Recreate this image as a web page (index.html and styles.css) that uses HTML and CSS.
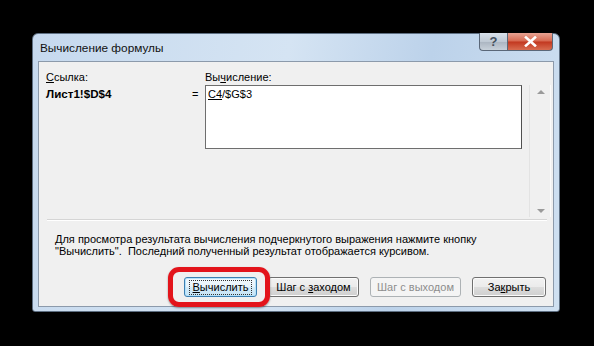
FILE: index.html
```html
<!DOCTYPE html>
<html lang="ru">
<head>
  <meta charset="UTF-8">
  <title>Вычисление формулы</title>
  <link rel="stylesheet" href="styles.css">
</head>
<body>
  <div class="window">
    <div class="titlebar">
      <span class="title">Вычисление формулы</span>
      <div class="caption-buttons">
        <span class="cap-btn help">?</span>
        <span class="cap-btn close">
          <svg width="13" height="11" viewBox="0 0 13 11">
            <path d="M2 1.5 L11 9.5 M11 1.5 L2 9.5" stroke="#fff" stroke-width="2.6" stroke-linecap="square"/>
          </svg>
        </span>
      </div>
    </div>
    <div class="content">
      <div class="pane">
        <div class="fields">
          <span class="label"><u>С</u>сылка:</span>
          <span></span>
          <span class="label">Вы<u>ч</u>исление:</span>
          <span class="ref">Лист1!$D$4</span>
          <span class="eq">=</span>
          <div class="formula"><u>C4</u>/$G$3</div>
        </div>
        <div class="vscroll">
          <span class="arrow up"></span>
          <span class="arrow down"></span>
        </div>
      </div>
      <div class="separator"></div>
      <p class="hint">Для просмотра результата вычисления подчеркнутого выражения нажмите кнопку<br>"Вычислить".&nbsp; Последний полученный результат отображается курсивом.</p>
      <div class="buttons">
        <div class="marked">
          <button class="btn focused"><span class="focus-ring"><u>В</u>ычислить</span></button>
          <span class="highlight"></span>
        </div>
        <button class="btn wide">Шаг с <u>з</u>аходом</button>
        <button class="btn wide" disabled>Шаг с выходом</button>
        <button class="btn">За<u>к</u>рыть</button>
      </div>
    </div>
  </div>
</body>
</html>
```

FILE: styles.css
```css
body {
  margin: 0;
  background: #000;
  font-family: "Liberation Sans", Arial, sans-serif;
  font-size: 11px;
  color: #000;
}

.window {
  width: 528px;
  height: 279px;
  margin: 33px 0 0 32px;
  box-sizing: border-box;
  border: 1px solid #5e6f82;
  border-radius: 6px 6px 3px 3px;
  background: linear-gradient(100deg, #c6d9ee 0%, #d5e4f3 45%, #bcd2ea 70%, #cfe0f1 100%);
  display: flex;
  flex-direction: column;
}

.titlebar {
  height: 27px;
  display: flex;
  justify-content: space-between;
  align-items: flex-start;
  padding-left: 7px;
}

.title {
  font-size: 11.8px;
  margin-top: 7px;
  color: #111;
}

.caption-buttons {
  display: flex;
  margin-right: 6px;
  margin-top: -1px;
}

.cap-btn {
  height: 18px;
  box-sizing: border-box;
  display: flex;
  align-items: center;
  justify-content: center;
  border: 1px solid #5a6778;
  border-top: none;
}

.help {
  width: 28px;
  border-right: none;
  border-radius: 0 0 0 4px;
  background: linear-gradient(#d9e1ea, #bfc9d4 50%, #aab4c0 51%, #c8d1da);
  color: #44505e;
  font-weight: bold;
  font-size: 13px;
}

.close {
  width: 46px;
  border-radius: 0 0 4px 0;
  background: linear-gradient(#e8a393, #d7684f 48%, #c2371f 52%, #d86c50);
}

.content {
  flex: 1;
  margin: 0 5px 4px 5px;
  background: #f0f0f0;
  border: 1px solid #8c9aab;
  padding: 7px 0 0 7px;
  display: flex;
  flex-direction: column;
}

.pane {
  display: flex;
  height: 148px;
}

.fields {
  display: grid;
  grid-template-columns: 146px 13px 317px;
  grid-template-rows: 16px 64px;
  align-content: start;
  line-height: 14px;
}

.label {
  padding-top: 1px;
}

.ref {
  font-weight: bold;
  font-size: 11.6px;
  padding-top: 2px;
}

.eq {
  padding-top: 2px;
}

.formula {
  background: #fff;
  border: 1px solid #6e6e6e;
  border-right-color: #505050;
  padding: 1px 2px;
}

.vscroll {
  width: 20px;
  margin: 16px 0 0 7px;
  border-left: 1px solid #e3e3e3;
  border-right: 1px solid #fbfbfb;
  display: flex;
  flex-direction: column;
  justify-content: space-between;
  align-items: center;
  padding: 5px 0 4px;
}

.arrow {
  width: 0;
  height: 0;
  border-left: 4px solid transparent;
  border-right: 4px solid transparent;
  margin-left: 2px;
}

.arrow.up {
  border-bottom: 4px solid #9a9a9a;
}

.arrow.down {
  border-top: 4px solid #9a9a9a;
}

.separator {
  margin: 2px 6px 0 1px;
  border-top: 1px solid #d5d5d5;
  border-bottom: 1px solid #fff;
}

.hint {
  margin: 12px 0 0 9px;
  line-height: 12px;
}

.buttons {
  display: flex;
  gap: 11px;
  margin: 20px 0 0 138px;
}

.btn {
  height: 20px;
  width: 74px;
  padding: 0;
  font: inherit;
  color: #000;
  border: 1px solid #707070;
  border-radius: 3px;
  background: linear-gradient(#f2f2f2, #ebebeb 50%, #dddddd 51%, #cfcfcf);
  box-shadow: inset 0 0 0 1px #fbfbfb;
}

.btn.wide {
  width: 91px;
}

.btn:disabled {
  color: #8d8d8d;
  border-color: #adb2b5;
  background: #f4f4f4;
  box-shadow: none;
}

.btn.focused {
  width: 73px;
  border-color: #3c7fb1;
  background: linear-gradient(#f2f9fd, #e6f3fb 50%, #d4ebf8 51%, #c6e4f6);
  box-shadow: inset 0 0 0 1px #b5e2fa;
}

.focus-ring {
  display: inline-block;
  padding: 0 3px;
  outline: 1px dotted #333;
  outline-offset: 0;
  line-height: 13px;
}

.marked {
  position: relative;
  display: flex;
}

.highlight {
  position: absolute;
  top: -10px;
  left: -16px;
  right: -13px;
  bottom: -10px;
  border: 5px solid #e3141b;
  border-radius: 11px;
  box-shadow: 0 1px 2px rgba(0, 0, 0, 0.4);
}
```
